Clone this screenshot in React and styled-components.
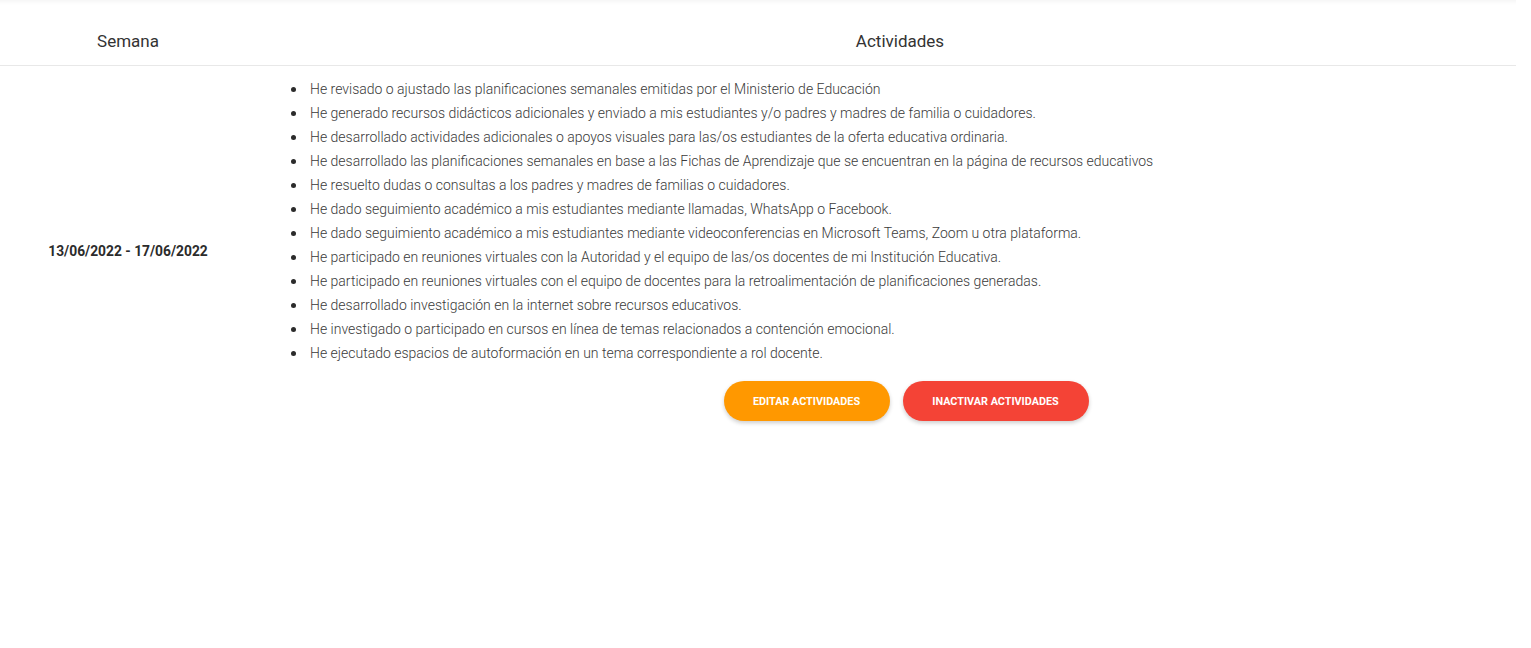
import React from 'react';
import styled, { createGlobalStyle } from 'styled-components';

const GlobalStyle = createGlobalStyle`
  body {
    margin: 0;
    background: #fff;
    font-family: Roboto, "Liberation Sans", sans-serif;
  }
`;

const Page = styled.div`
  width: 1516px;
  min-height: 648px;
  background: #fff;
  box-shadow: inset 0 5px 5px -4px rgba(0, 0, 0, 0.06);
`;

const Table = styled.div`
  display: grid;
  grid-template-columns: 256px 1fr;
`;

const HeadCell = styled.div`
  height: 66px;
  display: flex;
  align-items: center;
  justify-content: center;
  padding-left: ${(p) => p.$shift || 0}px;
  font-size: 17px;
  color: #333;
  border-bottom: 1px solid #e8e8e8;
  padding-top: 16px;
  box-sizing: border-box;
`;

const DateCell = styled.div`
  display: flex;
  align-items: center;
  justify-content: center;
  font-size: 13.8px;
  font-weight: 700;
  color: #2b2b2b;
`;

const ActivityCell = styled.div`
  padding: 11px 14px 15px;
`;

const List = styled.ul`
  margin: 0;
  padding-left: 40px;
  list-style: none;
  font-size: 14px;
  font-weight: 300;
  line-height: 24px;
  color: #3a3a3a;

  li::before {
    content: '';
    display: inline-block;
    width: 5px;
    height: 5px;
    border-radius: 50%;
    background: #2b2b2b;
    margin-left: -19px;
    margin-right: 14px;
    vertical-align: middle;
    position: relative;
    top: -1px;
  }
`;

const Actions = styled.div`
  display: flex;
  justify-content: center;
  gap: 13px;
  margin-top: 16px;
  padding-left: 40px;
`;

const Button = styled.button`
  height: 40px;
  width: ${(p) => p.$w}px;
  border: none;
  border-radius: 20px;
  background: ${(p) => p.$bg};
  color: #fff;
  font-family: Roboto, "Liberation Sans", sans-serif;
  font-size: 10.8px;
  font-weight: 700;
  text-transform: uppercase;
  box-shadow: 0 2px 4px rgba(0, 0, 0, 0.2);
  cursor: pointer;
`;

const activities = [
  'He revisado o ajustado las planificaciones semanales emitidas por el Ministerio de Educación',
  'He generado recursos didácticos adicionales y enviado a mis estudiantes y/o padres y madres de familia o cuidadores.',
  'He desarrollado actividades adicionales o apoyos visuales para las/os estudiantes de la oferta educativa ordinaria.',
  'He desarrollado las planificaciones semanales en base a las Fichas de Aprendizaje que se encuentran en la página de recursos educativos',
  'He resuelto dudas o consultas a los padres y madres de familias o cuidadores.',
  'He dado seguimiento académico a mis estudiantes mediante llamadas, WhatsApp o Facebook.',
  'He dado seguimiento académico a mis estudiantes mediante videoconferencias en Microsoft Teams, Zoom u otra plataforma.',
  'He participado en reuniones virtuales con la Autoridad y el equipo de las/os docentes de mi Institución Educativa.',
  'He participado en reuniones virtuales con el equipo de docentes para la retroalimentación de planificaciones generadas.',
  'He desarrollado investigación en la internet sobre recursos educativos.',
  'He investigado o participado en cursos en línea de temas relacionados a contención emocional.',
  'He ejecutado espacios de autoformación en un tema correspondiente a rol docente.',
];

const App = () => (
  <>
    <GlobalStyle />
    <Page>
      <Table>
        <HeadCell>Semana</HeadCell>
        <HeadCell $shift={28}>Actividades</HeadCell>
        <DateCell>13/06/2022 - 17/06/2022</DateCell>
        <ActivityCell>
          <List>
            {activities.map((a) => (
              <li key={a}>{a}</li>
            ))}
          </List>
          <Actions>
            <Button $bg="#ff9800" $w={166}>Editar actividades</Button>
            <Button $bg="#f44336" $w={186}>Inactivar actividades</Button>
          </Actions>
        </ActivityCell>
      </Table>
    </Page>
  </>
);

export default App;
